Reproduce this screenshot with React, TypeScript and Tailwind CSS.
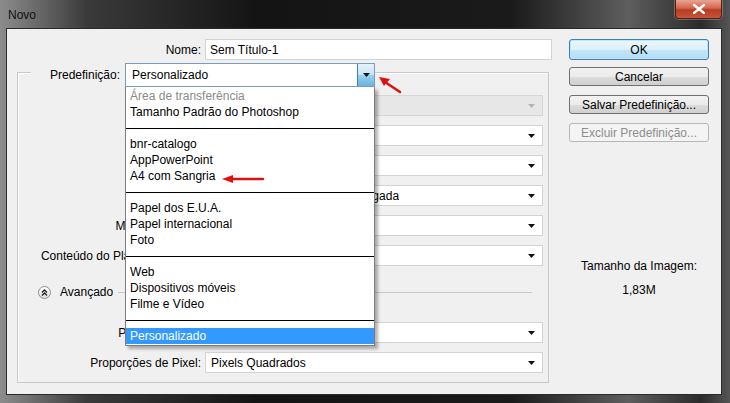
import React from 'react';

const Arrow = ({ light }: { light?: boolean }) => (
  <svg width="7" height="4" viewBox="0 0 7 4" className="shrink-0">
    <path d="M0 0h7L3.5 4z" fill={light ? '#b4b4b4' : '#111'} />
  </svg>
);

function Sel({ text, w, disabled }: { text?: string; w: string; disabled?: boolean }) {
  return (
    <div
      className={`${w} h-[21px] flex items-center justify-between pl-[5px] pr-[7px] border ${
        disabled ? 'bg-[#e7e7e7] border-[#d6d6d6]' : 'bg-white border-[#d3d3d3]'
      }`}
    >
      <span className="truncate">{text}</span>
      <Arrow light={disabled} />
    </div>
  );
}

function Row({ label, children }: { label?: string; children: React.ReactNode }) {
  return (
    <div className="flex items-center h-[21px]">
      <div className="w-[183px] text-right whitespace-nowrap">{label}</div>
      <div className="ml-[4px] flex gap-[8px]">{children}</div>
    </div>
  );
}

function Btn({ children, kind }: { children: React.ReactNode; kind?: 'default' | 'disabled' }) {
  const styles =
    kind === 'default'
      ? 'border-[#3c7fb1] bg-[linear-gradient(#ecf7fd_0%,#dcf0fb_50%,#c4e6f8_51%,#b3ddf4_100%)] shadow-[inset_0_0_0_1px_#bfe6fb]'
      : kind === 'disabled'
      ? 'border-[#b4b8bb] bg-[#f4f4f4] text-[#8d8d8d]'
      : 'border-[#707070] bg-[linear-gradient(#f2f2f2_0%,#ebebeb_50%,#dddddd_51%,#cfcfcf_100%)]';
  return (
    <div className={`w-[140px] flex items-center justify-center rounded-[3px] border ${styles}`}>
      {children}
    </div>
  );
}

const items: (string | null)[] = [
  'Área de transferência',
  'Tamanho Padrão do Photoshop',
  null,
  'bnr-catalogo',
  'AppPowerPoint',
  'A4 com Sangria',
  null,
  'Papel dos E.U.A.',
  'Papel internacional',
  'Foto',
  null,
  'Web',
  'Dispositivos móveis',
  'Filme e Vídeo',
  null,
  'Personalizado',
];

export default function App() {
  return (
    <div className="relative w-[730px] h-[403px] overflow-hidden flex flex-col font-['Liberation_Sans',Arial,sans-serif] text-[12px] text-black bg-[linear-gradient(90deg,#8c8c8c_0%,#3a3a3a_12%,#141414_35%,#1a1a1a_70%,#5e5e5e_86%,#2b2b2b_96%,#555_100%)]">
      {/* title bar */}
      <div className="h-[28px] flex items-start justify-between shrink-0">
        <div className="pl-[8px] pt-[6px] text-[12px] text-[#111]">Novo</div>
        <div className="mr-[8px] w-[47px] h-[19px] rounded-b-[4px] border border-t-0 border-[#5a1c12] bg-[linear-gradient(#e9a493_0%,#d2664c_45%,#b83c22_55%,#c4553a_100%)] flex items-center justify-center shadow-[0_0_0_1px_rgba(255,255,255,0.25)]">
          <svg width="12" height="10" viewBox="0 0 12 10">
            <path d="M1 1l10 8M11 1L1 9" stroke="#fff" strokeWidth="2.4" strokeLinecap="square" />
          </svg>
        </div>
      </div>

      {/* client area */}
      <div className="ml-[6px] mr-[8px] h-[367px] border border-[#2a2a2a] bg-[#f0f0f0] flex shrink-0">
        {/* left column */}
        <div className="w-[545px] flex flex-col">
          <div className="mt-[10px] flex items-center h-[21px]">
            <div className="w-[194px] text-right">Nome:</div>
            <div className="ml-[4px] w-[347px] h-[21px] bg-white border border-[#d3d3d3] flex items-center pl-[4px]">
              Sem Título-1
            </div>
          </div>

          <div className="ml-[10px] mt-[12px] w-[532px] h-[311px] border border-[#c9c9c9] shadow-[inset_1px_1px_0_#fff] flex flex-col">
            {/* legend row */}
            <div className="-mt-[10px] ml-[13px] self-start flex items-center bg-[#f0f0f0] pl-[19px]">
              <span>Predefinição:</span>
              <div className="relative ml-[5px]">
                <div className="w-[250px] h-[24px] bg-white border border-[#7a9cba] flex items-center justify-between">
                  <span className="pl-[6px]">Personalizado</span>
                  <div className="w-[17px] h-[22px] border-l border-[#3c7fb1] bg-[linear-gradient(#e5f4fc_0%,#c4e5f6_50%,#98d1ef_51%,#68b3db_100%)] flex items-center justify-center">
                    <Arrow />
                  </div>
                </div>
                {/* open dropdown */}
                <div className="absolute left-0 top-full z-10 w-[250px] bg-white border border-[#7d7d7d] border-t-0 py-[1px] shadow-[3px_3px_3px_rgba(0,0,0,0.3)]">
                  {items.map((it, i) =>
                    it === null ? (
                      <div key={i} className="h-[16px] flex items-center">
                        <div className="w-full h-[1px] bg-black" />
                      </div>
                    ) : (
                      <div
                        key={i}
                        className={`h-[16px] leading-[17px] pl-[4px] ${
                          i === 0 ? 'text-[#8a8a8a]' : ''
                        } ${it === 'Personalizado' ? 'bg-[#3399ff] text-white' : ''}`}
                      >
                        {it}
                      </div>
                    )
                  )}
                </div>
              </div>
            </div>

            <div className="mt-[8px] flex flex-col gap-[9px]">
              <Row label="Tamanho:">
                <Sel w="w-[338px]" disabled />
              </Row>
              <Row label="Largura:">
                <div className="w-[94px] h-[21px] bg-white border border-[#d3d3d3]" />
                <Sel w="w-[236px]" text="Pixels" />
              </Row>
              <Row label="Altura:">
                <div className="w-[94px] h-[21px] bg-white border border-[#d3d3d3]" />
                <Sel w="w-[236px]" text="Pixels" />
              </Row>
              <Row label="Resolução:">
                <div className="w-[94px] h-[21px] bg-white border border-[#d3d3d3]" />
                <Sel w="w-[236px]" text="Pixels/Polegada" />
              </Row>
              <Row label="Modo de Cores:">
                <Sel w="w-[94px]" text="Cor RGB" />
                <Sel w="w-[236px]" text="8 bits" />
              </Row>
              <Row label="Conteúdo do Plano de Fundo:">
                <Sel w="w-[338px]" text="Branco" />
              </Row>
            </div>

            {/* Avançado */}
            <div className="mt-[16px] h-[20px] flex items-center">
              <div className="ml-[20px] w-[13px] h-[13px] rounded-full border border-[#8f8f8f] bg-[linear-gradient(#ffffff,#dedede)] flex items-center justify-center">
                <svg width="7" height="7" viewBox="0 0 7 7">
                  <path d="M1 3.5L3.5 1L6 3.5M1 6.5L3.5 4L6 6.5" stroke="#222" strokeWidth="1.3" fill="none" />
                </svg>
              </div>
              <span className="ml-[9px]">Avançado</span>
              <div className="ml-[5px] w-[414px] h-[1px] bg-[#c8c8c8]" />
            </div>

            <div className="mt-[20px] flex flex-col gap-[9px]">
              <Row label="Perfil de Cores:">
                <Sel w="w-[338px]" text="sRGB IEC61966-2.1" />
              </Row>
              <Row label="Proporções de Pixel:">
                <Sel w="w-[338px]" text="Pixels Quadrados" />
              </Row>
            </div>
          </div>
        </div>

        {/* right column */}
        <div className="ml-[17px] w-[140px] flex flex-col">
          <div className="mt-[10px] h-[21px] flex">
            <Btn kind="default">OK</Btn>
          </div>
          <div className="mt-[7px] h-[19px] flex">
            <Btn>Cancelar</Btn>
          </div>
          <div className="mt-[9px] h-[19px] flex">
            <Btn>Salvar Predefinição...</Btn>
          </div>
          <div className="mt-[9px] h-[19px] flex">
            <Btn kind="disabled">Excluir Predefinição...</Btn>
          </div>
          <div className="mt-[116px] text-center leading-[16px]">Tamanho da Imagem:</div>
          <div className="mt-[8px] text-center leading-[16px]">1,83M</div>
        </div>
      </div>

      {/* red annotation arrows */}
      <svg className="absolute z-20 left-[376px] top-[74px]" width="28" height="22" viewBox="0 0 28 22">
        <path d="M24 18L9 8" stroke="#e01010" strokeWidth="2.6" strokeLinecap="round" />
        <path d="M3 3L14 5L8 12z" fill="#e01010" />
      </svg>
      <svg className="absolute z-20 left-[220px] top-[173px]" width="46" height="12" viewBox="0 0 46 12">
        <path d="M12 6H43" stroke="#e01010" strokeWidth="2.4" strokeLinecap="round" />
        <path d="M2 6L13 2V10z" fill="#e01010" />
      </svg>
    </div>
  );
}
